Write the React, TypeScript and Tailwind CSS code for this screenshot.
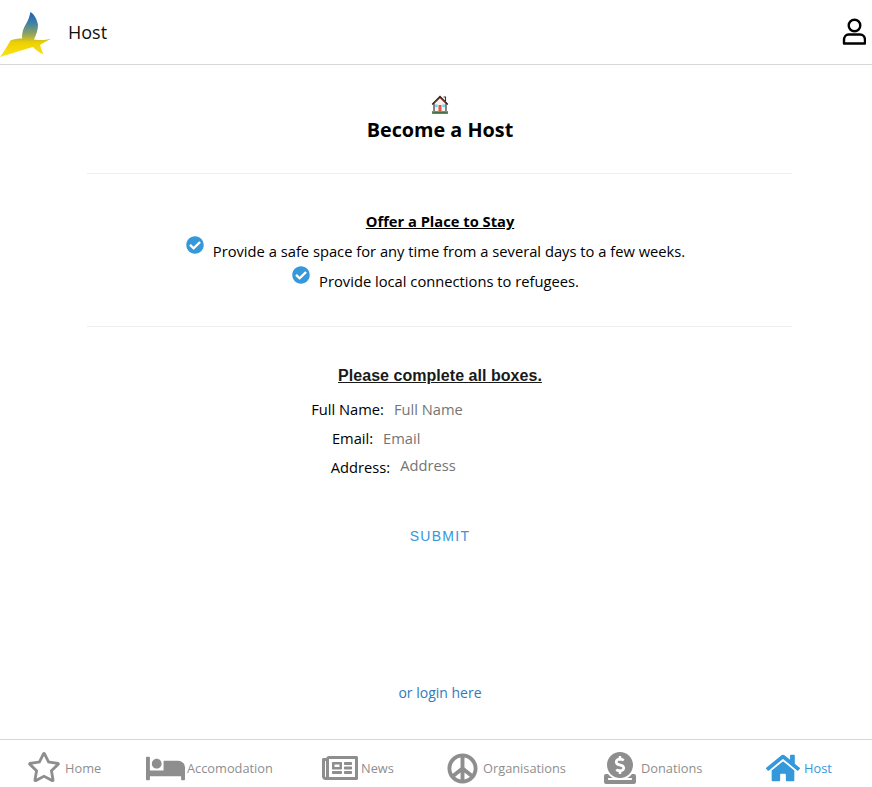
import { FaRegStar, FaBed, FaRegNewspaper, FaPeace, FaDonate, FaHome, FaCheckCircle } from "react-icons/fa";

const sans = "font-['Open_Sans','Noto_Sans',sans-serif]";

function Logo() {
  return (
    <svg width="54" height="54" viewBox="0 0 54 54" className="block">
      <defs>
        <linearGradient id="bird" x1="0" y1="7" x2="0" y2="52" gradientUnits="userSpaceOnUse">
          <stop offset="0" stopColor="#1f5fb8" />
          <stop offset="0.25" stopColor="#3f82a4" />
          <stop offset="0.5" stopColor="#95a55c" />
          <stop offset="0.68" stopColor="#eed000" />
          <stop offset="1" stopColor="#fbe31a" />
        </linearGradient>
      </defs>
      <path
        d="M30.500 7 C34 9 37 14 38 20 C38 25 36 30 34 34.500 C40 35.500 46 35 51 33.800 C47 36 44 37.500 40 40 C41 43 42 46 43.500 49.500 C39 47.500 36 45 33 42 C24 44.500 10 49 0 52 C4 47 7 41 10.500 35.500 C14 34 18 33.500 22 33.500 C22 27 23.500 23 26 19 C28.500 15 29.500 11 30.500 7 Z"
        fill="url(#bird)"
      />
    </svg>
  );
}

function User() {
  return (
    <svg width="24" height="27" viewBox="0 0 24 27" fill="none" stroke="#000" strokeWidth="2.400" className="block">
      <circle cx="12.500" cy="7.500" r="5.800" />
      <path d="M6.500 16.500 H18 C21 16.500 23 19 23 22 V25.500 H2 V22 C2 19 3.800 16.500 6.500 16.500 Z" strokeLinejoin="round" />
    </svg>
  );
}

function HouseEmoji() {
  return (
    <svg width="18" height="19" viewBox="0 0 18 19" className="block">
      <path d="M3 8 V17 H15 V8 L9 2.500 Z" fill="#f7f4ec" stroke="#222" strokeWidth="1.100" />
      <path d="M1.200 9.500 L9 1.500 L16.800 9.500" fill="none" stroke="#2a2220" strokeWidth="1.500" />
      <path d="M3.500 8 L9 3 L14.500 8" fill="none" stroke="#d9534a" strokeWidth="0.900" />
      <path d="M12.500 2 H14.500 V6" fill="none" stroke="#333" strokeWidth="1.100" />
      <rect x="7.500" y="10" width="3" height="6.500" fill="#e2574c" />
      <rect x="4.200" y="9.500" width="2.400" height="2.600" fill="#62d2f5" />
      <rect x="11.400" y="9.500" width="2.400" height="2.600" fill="#62d2f5" />
      <rect x="1" y="16" width="16" height="1.700" fill="#4caf50" />
      <rect x="1" y="17.600" width="16" height="1" fill="#222" />
    </svg>
  );
}

function Tab({ icon, label, active, className }: { icon: React.ReactNode; label: string; active?: boolean; className: string }) {
  return (
    <div className={`flex items-center shrink-0 ${className}`}>
      {icon}
      <span className={`text-[12.800px] leading-none ${active ? "text-[#3498db]" : "text-[#8e8e8e]"}`}>{label}</span>
    </div>
  );
}

function Check({ text }: { text: string }) {
  return (
    <div className="flex justify-center items-start h-[30px] pr-[8px]">
      <FaCheckCircle className="text-[#3498db] mr-[9px] mt-[-2px] shrink-0" size={18} />
      <span className="text-[14.720px] leading-[26px] text-black">{text}</span>
    </div>
  );
}

function Field({ label, className, inputClass }: { label: string; className?: string; inputClass: string }) {
  return (
    <div className={`flex justify-center items-center h-[20px] text-[14.700px] ${className ?? ""}`}>
      <span className="text-black">{label}:</span>
      <input
        placeholder={label}
        className={`ml-[10px] outline-none bg-transparent placeholder:text-[#757575] ${inputClass}`}
      />
    </div>
  );
}

export default function App() {
  return (
    <div className={`w-[872px] h-[787px] bg-white flex flex-col overflow-hidden ${sans}`}>
      <header className="h-[65px] shrink-0 border-b border-[#d8d8d8] flex items-center">
        <Logo />
        <span className="text-[18px] text-[#111] ml-[14px]">Host</span>
        <span className="ml-auto mr-[6px] mt-[-2px]">
          <User />
        </span>
      </header>

      <main className="flex-1 w-[705px] ml-[87px] flex flex-col items-stretch text-center">
        <div className="h-[109px] border-b border-[#eeeeee] flex flex-col items-center pt-[30px]">
          <HouseEmoji />
          <h1 className="text-[19.800px] leading-[27px] font-bold text-black mt-[2px] ml-[1px]">Become a Host</h1>
        </div>

        <div className="h-[153px] border-b border-[#eeeeee] pt-[37px]">
          <h2 className="text-[14.700px] leading-[20px] font-bold underline text-black mb-[7px] ml-[1px]">Offer a Place to Stay</h2>
          <Check text="Provide a safe space for any time from a several days to a few weeks." />
          <Check text="Provide local connections to refugees." />
        </div>

        <h2 className="font-['Liberation_Sans',sans-serif] text-[16px] tracking-[0.04px] leading-[20px] font-bold underline text-[#1a1a1a] mt-[39px] mb-[13px] ml-[1px]">
          Please complete all boxes.
        </h2>
        <Field label="Full Name" inputClass="w-[174px]" />
        <Field label="Email" className="mt-[9px]" inputClass="w-[164px]" />
        <Field label="Address" className="mt-[9px]" inputClass="w-[148px] mb-[4px]" />

        <div className="font-['Liberation_Sans',sans-serif] text-[14px] tracking-[1.300px] text-[#3498db] mt-[49px] ml-[1px]">SUBMIT</div>

        <div className="text-[14px] text-[#337ab7] mt-[135px] ml-[1px]">or login here</div>
      </main>

      <nav className="h-[48px] shrink-0 border-t border-[#d8d8d8] flex items-center pt-[10px] pl-[27px]">
        <Tab className="w-[119px]" label="Home" icon={<FaRegStar size={34} className="text-[#8e8e8e] mr-[4px] mb-[3px]" />} />
        <Tab className="w-[176px]" label="Accomodation" icon={<FaBed size={39} className="text-[#8e8e8e] mr-[2px]" />} />
        <Tab className="w-[125px]" label="News" icon={<FaRegNewspaper size={36} className="text-[#8e8e8e] mr-[3px] mb-[1px]" />} />
        <Tab className="w-[157px]" label="Organisations" icon={<FaPeace size={31} className="text-[#8e8e8e] mr-[5px] mb-[1px]" />} />
        <Tab className="w-[162px]" label="Donations" icon={<FaDonate size={32} className="text-[#8e8e8e] mr-[5px] mb-[1px]" />} />
        <Tab className="w-[66px]" label="Host" active icon={<FaHome size={34} className="text-[#3498db] mr-[4px] mb-[1px]" />} />
      </nav>
    </div>
  );
}
